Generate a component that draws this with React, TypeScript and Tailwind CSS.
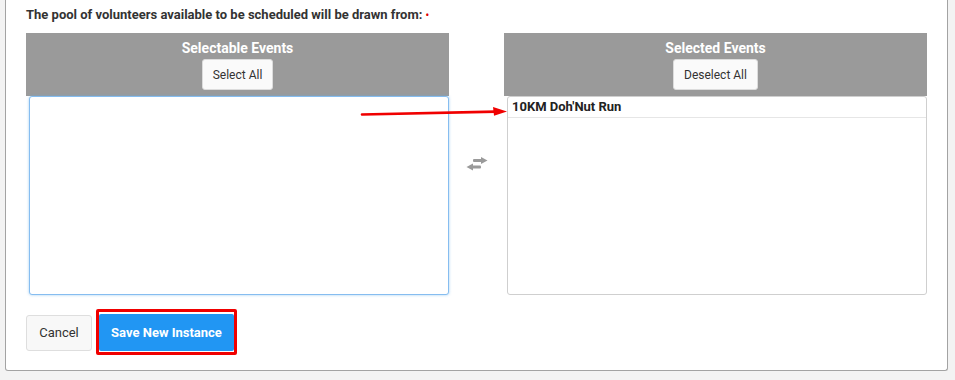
import { ReactNode } from "react";

function PanelHeader({ title, action }: { title: string; action: string }) {
  return (
    <div className="flex h-[63px] flex-col items-center bg-[#9a9a9a] pt-[6px]">
      <div className="text-[14px] leading-[18px] font-bold text-white">{title}</div>
      <button className="mt-[2px] h-[31px] rounded-[3px] border border-[#dcdcdc] bg-[#fafafa] px-[10px] text-[12px] text-[#333]">
        {action}
      </button>
    </div>
  );
}

function ListBox({ focused, children }: { focused?: boolean; children?: ReactNode }) {
  return (
    <div
      className={
        focused
          ? "ml-[3px] h-[199px] rounded-[3px] border border-[#86bdf0] bg-white shadow-[0_0_3px_rgba(102,175,233,0.6)]"
          : "ml-[3px] h-[199px] rounded-[3px] border border-[#cfcfcf] bg-white"
      }
    >
      {children}
    </div>
  );
}

function ExchangeIcon() {
  return (
    <svg width="22" height="14" viewBox="0 0 22 14" fill="#9a9a9a">
      <rect x="7" y="2" width="9" height="3" rx="1" />
      <polygon points="15,0 21.5,3.5 15,7" />
      <rect x="6" y="8.5" width="9" height="3" rx="1" />
      <polygon points="7,6.5 0.5,10 7,13.5" />
    </svg>
  );
}

function RedArrow() {
  return (
    <svg
      className="absolute left-[334px] top-[72px]"
      width="150"
      height="14"
      viewBox="0 0 150 14"
    >
      <path d="M2 9.5 L136 6.6" stroke="#f00000" strokeWidth="2.6" strokeLinecap="round" />
      <polygon points="133,2 147,6.4 134,10.8" fill="#f00000" />
    </svg>
  );
}

export default function App() {
  return (
    <div className="h-[380px] w-[955px] bg-[#f3f3f3] font-['Roboto','Liberation_Sans',sans-serif]">
      <div className="ml-[5px] h-[371px] w-[943px] rounded-b-[3px] border-x border-b border-[#a3a3a3] bg-white px-[20px]">
        <div className="pt-[6px] text-[13px] leading-[18px] font-bold text-[#333]">
          The pool of volunteers available to be scheduled will be drawn from:{" "}
          <span className="text-[10px] text-[#e00000]">•</span>
        </div>

        <div className="relative mt-[8px] flex">
          <div className="w-[423px]">
            <PanelHeader title="Selectable Events" action="Select All" />
            <ListBox focused />
          </div>
          <div className="flex w-[55px] items-center justify-center">
            <ExchangeIcon />
          </div>
          <div className="w-[423px]">
            <PanelHeader title="Selected Events" action="Deselect All" />
            <ListBox>
              <div className="h-[21px] border-b border-[#e6e6e6] pl-[4px] text-[13px] leading-[19px] font-bold text-[#222]">
                10KM Doh'Nut Run
              </div>
            </ListBox>
          </div>
          <RedArrow />
        </div>

        <div className="mt-[19px] flex items-center">
          <button className="h-[36px] w-[66px] rounded-[3px] border border-[#dedede] bg-[#f8f8f8] text-[13px] text-[#333]">
            Cancel
          </button>
          <div className="relative ml-[7px] flex">
            <button className="h-[37px] w-[135px] rounded-[2px] bg-[#2196f3] text-[13px] font-bold text-white">
              Save New Instance
            </button>
            <span className="absolute -top-[5px] -bottom-[4px] -left-[3px] -right-[3px] rounded-[2px] border-[3px] border-[#f00000]" />
          </div>
        </div>
      </div>
    </div>
  );
}
